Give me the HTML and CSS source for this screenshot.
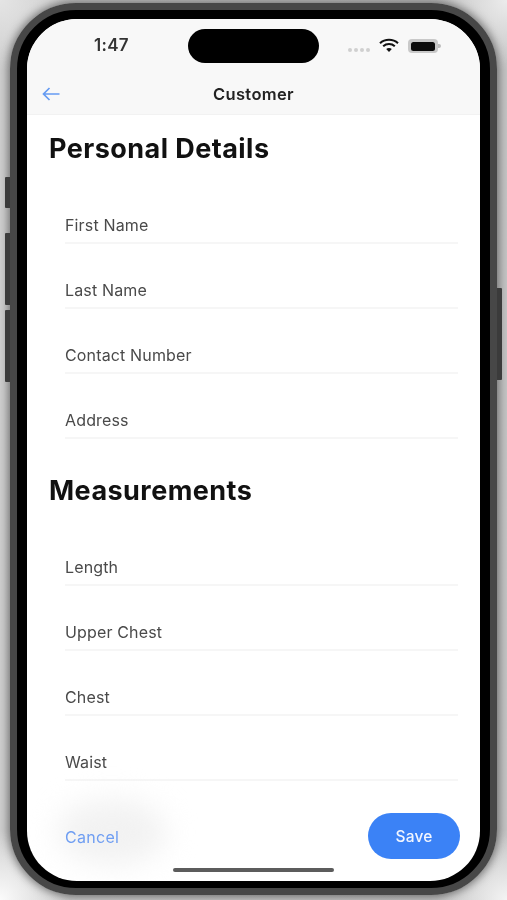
FILE: index.html
```html
<!DOCTYPE html>
<html lang="en">
<head>
<meta charset="utf-8">
<title>Customer</title>
<link rel="stylesheet" href="styles.css">
</head>
<body>
<div class="stage">
  <div class="device">
    <span class="side side-mute"></span>
    <span class="side side-up"></span>
    <span class="side side-down"></span>
    <span class="side side-power"></span>
    <div class="bezel">
      <div class="screen">
        <header class="topbar">
          <div class="status">
            <span class="time">1:47</span>
            <span class="island"></span>
            <span class="status-icons">
              <span class="signal"><i></i><i></i><i></i><i></i></span>
              <svg class="wifi" width="20" height="14" viewBox="0 0 20 14"><path d="M1 5.200C5.900.6 14.100.6 19 5.200" fill="none" stroke="#111" stroke-width="2.100"/><path d="M4.200 8.200c3.200-2.900 8.400-2.900 11.600 0" fill="none" stroke="#111" stroke-width="2.100"/><path d="M7.200 11c1.600-1.300 4-1.300 5.600 0L10 14z" fill="#111"/></svg>
              <span class="battery"><span class="battery-fill"></span></span>
            </span>
          </div>
          <div class="nav">
            <svg class="back" width="18" height="14" viewBox="0 0 18 14"><path d="M17.500 7H1.500M7.500 1 1.500 7l6 6" fill="none" stroke="#659bf2" stroke-width="1.700"/></svg>
            <h1 class="nav-title">Customer</h1>
          </div>
        </header>
        <main class="content">
          <h2 class="section-title">Personal Details</h2>
          <div class="fields">
            <div class="field">First Name</div>
            <div class="field">Last Name</div>
            <div class="field">Contact Number</div>
            <div class="field">Address</div>
          </div>
          <h2 class="section-title section-second">Measurements</h2>
          <div class="fields">
            <div class="field">Length</div>
            <div class="field">Upper Chest</div>
            <div class="field">Chest</div>
            <div class="field">Waist</div>
          </div>
        </main>
        <footer class="actions">
          <span class="smudge"></span>
          <button class="btn-cancel" type="button">Cancel</button>
          <button class="btn-save" type="button">Save</button>
        </footer>
        <div class="home"></div>
      </div>
    </div>
  </div>
</div>
</body>
</html>
```
FILE: styles.css
```css
* { box-sizing: border-box; }
html, body { margin: 0; height: 900px; overflow: hidden; }
body {
  width: 507px;
  background: #fff;
  font-family: Inter, "Liberation Sans", sans-serif;
}
.stage {
  width: 507px;
  height: 900px;
  padding: 3px 0 0 10px;
  background:
    radial-gradient(circle at 0 900px, #fbfbfb 0, rgba(251,251,251,0) 70px),
    radial-gradient(circle at 507px 900px, #f4f4f4 0, rgba(244,244,244,0) 70px),
    radial-gradient(circle at 0 0, #e4e4e4 0, rgba(228,228,228,0) 70px),
    radial-gradient(circle at 507px 0, #ececec 0, rgba(236,236,236,0) 70px),
    linear-gradient(90deg, #cfcfcf 0, #c4c4c4 100%);
  filter: blur(.5px);
}
.device {
  position: relative;
  width: 487px;
  height: 892px;
  border-radius: 66px;
  box-shadow: 0 0 9px 2px rgba(50,50,50,.6);
}
.side {
  position: absolute;
  background: #3b3b3b;
  border-radius: 1px;
}
.side-mute { left: -5px; top: 174px; width: 6px; height: 31px; }
.side-up { left: -5px; top: 230px; width: 6px; height: 72px; }
.side-down { left: -5px; top: 307px; width: 6px; height: 72px; }
.side-power { right: -5px; top: 285px; width: 6px; height: 92px; }
.bezel {
  position: relative;
  width: 100%;
  height: 100%;
  padding: 9px 10px 7px;
  background: #000;
  border: 7px solid #474747;
  border-radius: 66px;
}
.screen {
  position: relative;
  display: flex;
  flex-direction: column;
  height: 100%;
  overflow: hidden;
  background: #fff;
  border-radius: 50px;
}
.topbar {
  height: 96px;
  flex: none;
  background: #f8f8f8;
  border-bottom: 1px solid #f2f2f2;
}
.status {
  position: relative;
  height: 54px;
  display: flex;
  align-items: center;
  justify-content: space-between;
  padding: 0 42px 2px 67px;
}
.time { font-size: 17px; font-weight: 600; color: #333; letter-spacing: .3px; }
.island {
  position: absolute;
  left: 161px;
  top: 10px;
  width: 131px;
  height: 34px;
  background: #000;
  border-radius: 17px;
}
.status-icons { display: flex; align-items: center; gap: 9px; margin-top: 2px; }
.signal { display: flex; gap: 2px; margin-top: 8px; }
.signal i { width: 4px; height: 4px; border-radius: 50%; background: #d0d0d0; }
.wifi { margin-top: -2px; }
.battery {
  position: relative;
  width: 30px;
  height: 14px;
  padding: 2.500px 3px;
  background: #c9c9c9;
  border-radius: 4px;
}
.battery::after {
  content: "";
  position: absolute;
  right: -2.500px;
  top: 5px;
  width: 2.500px;
  height: 4px;
  background: #bdbdbd;
  border-radius: 0 2px 2px 0;
}
.battery-fill { display: block; height: 100%; background: #0c0c0c; border-radius: 2.500px; }
.nav {
  position: relative;
  height: 41px;
  display: flex;
  align-items: center;
  justify-content: center;
}
.back { position: absolute; left: 15px; top: 14px; }
.nav-title { margin: 0; font-size: 16.500px; font-weight: 600; color: #222; letter-spacing: .35px; }
.content { flex: 1; padding: 17px 22px 0; }
.section-title {
  margin: 0;
  font-size: 27px;
  line-height: 34px;
  font-weight: 700;
  color: #111;
  letter-spacing: .45px;
}
.section-second { margin-top: 35px; }
.fields { padding: 13px 0 0 16px; }
.field {
  height: 65px;
  padding-top: 36px;
  font-size: 16px;
  line-height: 20px;
  color: #4a4a4a;
  letter-spacing: .15px;
  border-bottom: 2px solid #f6f6f6;
}
.actions {
  position: absolute;
  left: 0;
  right: 0;
  top: 794px;
  height: 46px;
  display: flex;
  align-items: center;
  justify-content: space-between;
  padding: 0 20px 0 38px;
}
.smudge {
  position: absolute;
  left: 30px;
  top: -14px;
  width: 110px;
  height: 66px;
  background: #f2f2f2;
  border-radius: 50%;
  filter: blur(14px);
}
.btn-cancel {
  position: relative;
  top: 1px;
  padding: 0;
  border: 0;
  background: none;
  font: 400 16px Inter, "Liberation Sans", sans-serif;
  color: #6f9ef2;
  letter-spacing: .3px;
}
.btn-save {
  position: relative;
  width: 92px;
  height: 46px;
  border: 0;
  border-radius: 23px;
  background: #3b82f6;
  color: #f2f6ff;
  font: 500 15.500px Inter, "Liberation Sans", sans-serif;
  letter-spacing: .2px;
}
.home {
  position: absolute;
  left: 146px;
  top: 849px;
  width: 161px;
  height: 4px;
  background: #5c5c5c;
  border-radius: 2px;
}
```
